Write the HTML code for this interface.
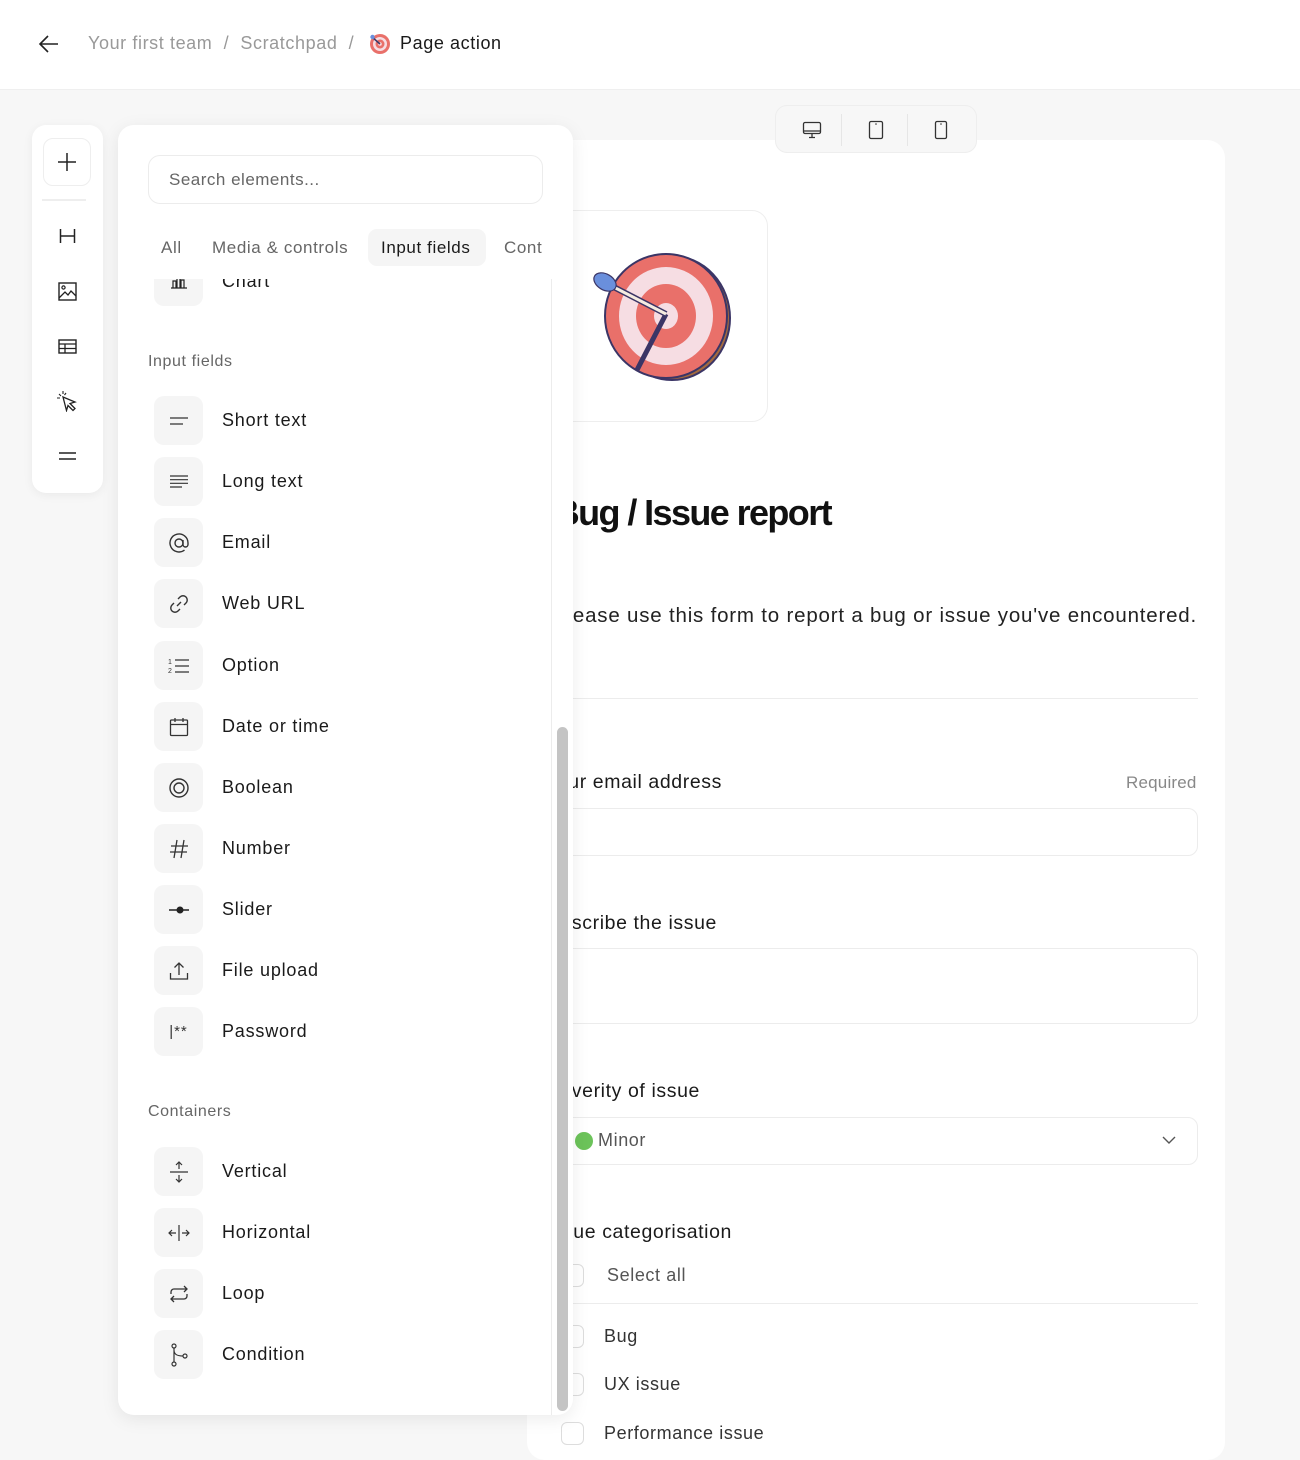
<!DOCTYPE html>
<html><head><meta charset="utf-8"><style>
*{box-sizing:border-box;margin:0;padding:0}
body{width:1300px;height:1447px;overflow:hidden;background:#f7f7f7;font-family:"Liberation Sans",sans-serif;color:#1a1a1a;position:relative}
.hdr{position:absolute;left:0;top:0;width:1300px;height:90px;background:#fff;border-bottom:1px solid #efefef}
.crumb{position:absolute;top:33px;font-size:18px;letter-spacing:0.6px}
.card{position:absolute;left:527px;top:140px;width:698px;height:1320px;background:#fff;border-radius:18px}
.abs{position:absolute}
.lbl{position:absolute;font-size:19.5px;letter-spacing:.6px;color:#1a1a1a;text-align:right;white-space:nowrap}
.inp{position:absolute;left:557px;width:641px;border:1px solid #ececec;border-radius:10px;background:#fff}
.cb{position:absolute;left:561px;width:23px;height:23px;border:1px solid #ddd;border-radius:6px;background:#fff}
.cbt{position:absolute;left:604px;font-size:18px;color:#333;letter-spacing:.6px}
.rail{position:absolute;left:32px;top:125px;width:71px;height:368px;background:#fff;border-radius:14px;box-shadow:0 2px 10px rgba(0,0,0,.06)}
.panel{position:absolute;left:118px;top:125px;width:455px;height:1290px;background:#fff;border-radius:16px;box-shadow:0 4px 18px rgba(0,0,0,.08);overflow:hidden;z-index:5}
.it{position:absolute;left:36px;height:49px;width:300px}
.ib{position:absolute;left:0;top:0;width:49px;height:49px;background:#f5f5f5;border-radius:10px;display:flex;align-items:center;justify-content:center}
.it span{position:absolute;left:68px;top:14px;font-size:18px;color:#1a1a1a;letter-spacing:0.8px}
.sec{position:absolute;left:30px;font-size:16px;color:#666;letter-spacing:.6px}
.tab{position:absolute;top:113px;font-size:17px;color:#666;letter-spacing:.6px}
svg{display:block}
</style></head><body>
<div class="hdr">
 <svg class="abs" style="left:38px;top:34px" width="22" height="20" viewBox="0 0 22 20"><path d="M20 10H2M10 2L2 10l8 8" fill="none" stroke="#222" stroke-width="1.6"/></svg>
 <div class="crumb" style="left:88px;color:#999">Your first team&nbsp; /&nbsp; Scratchpad&nbsp; /</div>
 <svg class="abs" style="left:369px;top:33px" width="22" height="22" viewBox="0 0 22 22"><circle cx="11" cy="11" r="10" fill="#e9706a"/><circle cx="11" cy="11" r="7" fill="#f6dde3"/><circle cx="11" cy="11" r="4.5" fill="#e9706a"/><circle cx="11" cy="11" r="1.8" fill="#f6dde3"/><path d="M3 4l8 7" stroke="#3a3a6a" stroke-width="1.5"/><circle cx="3.5" cy="4" r="2.2" fill="#6a8fdc"/></svg>
 <div class="crumb" style="left:400px;color:#1a1a1a">Page action</div>
</div>

<div class="abs" style="left:775px;top:105px;width:202px;height:48px;background:#f7f7f7;border:1px solid #eee;border-radius:12px;z-index:2">
 <div class="abs" style="left:65px;top:8px;width:1px;height:32px;background:#e6e6e6"></div>
 <div class="abs" style="left:131px;top:8px;width:1px;height:32px;background:#e6e6e6"></div>
 <svg class="abs" style="left:26px;top:15px" width="20" height="18" viewBox="0 0 20 18"><rect x="1.5" y="1.5" width="17" height="11" rx="1.5" fill="none" stroke="#333" stroke-width="1.3"/><path d="M1.5 10h17M10 13v3M7 16.5h6" stroke="#333" stroke-width="1.3"/></svg>
 <svg class="abs" style="left:92px;top:14px" width="16" height="20" viewBox="0 0 16 20"><rect x="1.5" y="1.5" width="13" height="17" rx="1.5" fill="none" stroke="#333" stroke-width="1.3"/><circle cx="8" cy="4" r=".8" fill="#333"/></svg>
 <svg class="abs" style="left:158px;top:14px" width="14" height="20" viewBox="0 0 14 20"><rect x="1.5" y="1.5" width="11" height="17" rx="1.5" fill="none" stroke="#333" stroke-width="1.3"/><circle cx="7" cy="4" r=".8" fill="#333"/></svg>
</div>

<div class="card">
 <div class="abs" style="left:30px;top:70px;width:211px;height:212px;border:1px solid #eee;border-radius:16px"></div>
 <svg class="abs" style="left:63px;top:110px" width="145" height="135" viewBox="0 0 145 135">
  <ellipse cx="82" cy="68" rx="58" ry="62" fill="#a36a3e" stroke="#3b3566" stroke-width="2"/>
  <ellipse cx="76" cy="66" rx="61" ry="62" fill="#e9706a" stroke="#3b3566" stroke-width="2"/>
  <ellipse cx="76" cy="66" rx="47" ry="49" fill="#f6dde3"/>
  <ellipse cx="76" cy="66" rx="30" ry="32" fill="#e9706a"/>
  <ellipse cx="76" cy="66" rx="12" ry="13" fill="#f6dde3"/>
  <path d="M76 64L47 120" stroke="#3b3566" stroke-width="5"/>
  <path d="M10 30L76 64" stroke="#3b3566" stroke-width="6"/><path d="M10 30L76 64" stroke="#f5ece0" stroke-width="3"/>
  <ellipse cx="15" cy="32" rx="12" ry="8" fill="#6a8fdc" stroke="#3b3566" stroke-width="1.2" transform="rotate(30 15 32)"/>
 </svg>
 <div class="abs" style="right:394px;top:352px;font-size:36px;font-weight:bold;letter-spacing:-1.6px;color:#111;white-space:nowrap">Bug / Issue report</div>
 <div class="abs" style="right:28px;top:464px;font-size:20.5px;letter-spacing:.8px;color:#222;white-space:nowrap">Please use this form to report a bug or issue you've encountered.</div>
 <div class="abs" style="left:30px;top:558px;width:641px;height:1px;background:#ececec"></div>
</div>
<div class="lbl" style="top:771px;right:578px">Your email address</div>
<div class="abs" style="left:1126px;top:773px;font-size:17px;color:#888;letter-spacing:.2px">Required</div>
<div class="inp" style="top:808px;height:48px"></div>
<div class="lbl" style="top:912px;right:583px">Describe the issue</div>
<div class="inp" style="top:948px;height:76px"></div>
<div class="lbl" style="top:1080px;right:600px">Severity of issue</div>
<div class="inp" style="top:1117px;height:48px"></div>
<div class="abs" style="left:575px;top:1132px;width:18px;height:18px;border-radius:50%;background:#6cc35a"></div>
<div class="abs" style="left:598px;top:1130px;font-size:18px;color:#555;letter-spacing:.6px">Minor</div>
<svg class="abs" style="left:1162px;top:1136px" width="14" height="9" viewBox="0 0 14 9"><path d="M1 1l6 6 6-6" fill="none" stroke="#555" stroke-width="1.4"/></svg>
<div class="lbl" style="top:1221px;right:568px">Issue categorisation</div>
<div class="cb" style="top:1264px"></div><div class="cbt" style="left:607px;top:1265px;color:#555">Select all</div>
<div class="abs" style="left:557px;top:1303px;width:641px;height:1px;background:#ececec"></div>
<div class="cb" style="top:1325px"></div><div class="cbt" style="top:1326px">Bug</div>
<div class="cb" style="top:1373px"></div><div class="cbt" style="top:1374px">UX issue</div>
<div class="cb" style="top:1422px"></div><div class="cbt" style="top:1423px">Performance issue</div>

<div class="rail">
 <div class="abs" style="left:11px;top:13px;width:48px;height:48px;border:1px solid #eee;border-radius:10px"></div>
 <svg class="abs" style="left:25px;top:27px" width="20" height="20" viewBox="0 0 20 20"><path d="M10 1v18M1 10h18" stroke="#222" stroke-width="1.5"/></svg>
 <div class="abs" style="left:10px;top:74px;width:44px;height:2px;background:#eee"></div>
 <svg class="abs" style="left:27px;top:103px" width="17" height="16" viewBox="0 0 17 16"><path d="M1.5 1v14M15.5 1v14M1.5 8h14" stroke="#222" stroke-width="1.5"/></svg>
 <svg class="abs" style="left:26px;top:157px" width="19" height="19" viewBox="0 0 19 19"><rect x="1" y="1" width="17" height="17" fill="none" stroke="#222" stroke-width="1.4"/><circle cx="5.5" cy="5.5" r="1.6" fill="none" stroke="#222" stroke-width="1.2"/><path d="M1 16l6-6 3 3 3-4 5 5" fill="none" stroke="#222" stroke-width="1.3"/></svg>
 <svg class="abs" style="left:26px;top:214px" width="19" height="15" viewBox="0 0 19 15"><rect x="1" y="1" width="17" height="13" fill="none" stroke="#222" stroke-width="1.4"/><path d="M1 5h17M1 9.5h17M7 5v9" stroke="#222" stroke-width="1.3"/></svg>
 <svg class="abs" style="left:24px;top:265px" width="22" height="22" viewBox="0 0 22 22"><path d="M7 7l12 5-5 1.5 5 5-2 2-5-5-1.5 5z" fill="none" stroke="#222" stroke-width="1.3"/><path d="M3 4l2 2M7 1v3M1 8h3M10 3l-1.5 2" stroke="#222" stroke-width="1.1"/></svg>
 <svg class="abs" style="left:26px;top:326px" width="19" height="10" viewBox="0 0 19 10"><path d="M1 2h17M1 8h17" stroke="#222" stroke-width="1.5"/></svg>
</div>

<div class="panel">
 <div class="abs" style="left:30px;top:30px;width:395px;height:49px;border:1px solid #ececec;border-radius:12px"></div>
 <div class="abs" style="left:51px;top:45px;font-size:17px;color:#666;letter-spacing:.5px">Search elements...</div>
 <div class="abs" style="left:0;top:150px;width:455px;height:1140px">
  <div class="it" style="top:-18px"><div class="ib"><svg width="20" height="14" viewBox="0 0 20 14"><path d="M2 13h16M4 13V6h3v7M8 13V2h3v11M12 13V5h3v8" fill="none" stroke="#222" stroke-width="1.2"/></svg></div><span>Chart</span></div>
  <div class="sec" style="top:78px">Input fields</div>
  <div class="it" style="top:121px"><div class="ib"><svg width="20" height="8" viewBox="0 0 20 8"><path d="M1 1h18M1 7h13" stroke="#333" stroke-width="1.3"/></svg></div><span>Short text</span></div>
  <div class="it" style="top:182px"><div class="ib"><svg width="20" height="13" viewBox="0 0 20 13"><path d="M1 1h18M1 4.7h18M1 8.3h18M1 12h12" stroke="#333" stroke-width="1.2"/></svg></div><span>Long text</span></div>
  <div class="it" style="top:243px"><div class="ib"><svg width="22" height="22" viewBox="0 0 22 22"><circle cx="11" cy="11" r="4" fill="none" stroke="#333" stroke-width="1.4"/><path d="M15 8v4.5a2.5 2.5 0 0 0 5 0V11a9 9 0 1 0-3.5 7.1" fill="none" stroke="#333" stroke-width="1.4"/></svg></div><span>Email</span></div>
  <div class="it" style="top:304px"><div class="ib"><svg width="22" height="22" viewBox="0 0 22 22"><path d="M9 13l4-4M10 6l2-2a4 4 0 0 1 6 6l-2 2M12 16l-2 2a4 4 0 0 1-6-6l2-2" fill="none" stroke="#333" stroke-width="1.4"/></svg></div><span>Web URL</span></div>
  <div class="it" style="top:366px"><div class="ib"><svg width="22" height="18" viewBox="0 0 22 18"><text x="0" y="7" font-size="7" font-family="Liberation Sans" fill="#333">1</text><text x="0" y="16" font-size="7" font-family="Liberation Sans" fill="#333">2</text><path d="M7 3h14M7 9h14M7 15h14" stroke="#333" stroke-width="1.3"/></svg></div><span>Option</span></div>
  <div class="it" style="top:427px"><div class="ib"><svg width="20" height="20" viewBox="0 0 20 20"><rect x="1.5" y="3" width="17" height="15.5" rx="1" fill="none" stroke="#333" stroke-width="1.3"/><path d="M1.5 7.5h17M6 1v4M14 1v4" stroke="#333" stroke-width="1.3"/></svg></div><span>Date or time</span></div>
  <div class="it" style="top:488px"><div class="ib"><svg width="22" height="22" viewBox="0 0 22 22"><circle cx="11" cy="11" r="9" fill="none" stroke="#333" stroke-width="1.4"/><circle cx="11" cy="11" r="5" fill="none" stroke="#333" stroke-width="1.4"/></svg></div><span>Boolean</span></div>
  <div class="it" style="top:549px"><div class="ib"><svg width="20" height="20" viewBox="0 0 20 20"><path d="M8 1L5 19M15 1l-3 18M2 7h17M1 13h17" stroke="#333" stroke-width="1.3"/></svg></div><span>Number</span></div>
  <div class="it" style="top:610px"><div class="ib"><svg width="22" height="10" viewBox="0 0 22 10"><path d="M1 5h20" stroke="#222" stroke-width="1.5"/><circle cx="12" cy="5" r="3.5" fill="#222"/></svg></div><span>Slider</span></div>
  <div class="it" style="top:671px"><div class="ib"><svg width="20" height="20" viewBox="0 0 20 20"><path d="M10 14V2M5.5 6.5L10 2l4.5 4.5M1.5 12v6h17v-6" fill="none" stroke="#333" stroke-width="1.3"/></svg></div><span>File upload</span></div>
  <div class="it" style="top:732px"><div class="ib"><span style="position:static;font-size:15px;letter-spacing:1px;color:#333">|**</span></div><span>Password</span></div>
  <div class="sec" style="top:828px">Containers</div>
  <div class="it" style="top:872px"><div class="ib"><svg width="20" height="24" viewBox="0 0 20 24"><path d="M1 12h18M10 2v7M7 5l3-3 3 3M10 15v7M7 19l3 3 3-3" fill="none" stroke="#333" stroke-width="1.2"/></svg></div><span>Vertical</span></div>
  <div class="it" style="top:933px"><div class="ib"><svg width="24" height="20" viewBox="0 0 24 20"><path d="M12 2v16M2 10h7M5 7l-3 3 3 3M15 10h7M19 7l3 3-3 3" fill="none" stroke="#333" stroke-width="1.2"/></svg></div><span>Horizontal</span></div>
  <div class="it" style="top:994px"><div class="ib"><svg width="22" height="20" viewBox="0 0 22 20"><path d="M3 10V8a3 3 0 0 1 3-3h13M16 2l3 3-3 3M19 10v2a3 3 0 0 1-3 3H3M6 12l-3 3 3 3" fill="none" stroke="#333" stroke-width="1.3"/></svg></div><span>Loop</span></div>
  <div class="it" style="top:1055px"><div class="ib"><svg width="20" height="24" viewBox="0 0 20 24"><circle cx="5" cy="3" r="2" fill="none" stroke="#333" stroke-width="1.2"/><circle cx="5" cy="21" r="2" fill="none" stroke="#333" stroke-width="1.2"/><circle cx="16" cy="13" r="2" fill="none" stroke="#333" stroke-width="1.2"/><path d="M5 5v14M5 7c0 5 4 6 9 6" fill="none" stroke="#333" stroke-width="1.2"/></svg></div><span>Condition</span></div>
 </div>
 <div class="abs" style="left:0;top:96px;width:455px;height:58px;background:#fff"></div>
 <div class="tab" style="left:43px">All</div>
 <div class="tab" style="left:94px">Media &amp; controls</div>
 <div class="abs" style="left:250px;top:104px;width:118px;height:37px;background:#f5f5f5;border-radius:9px"></div>
 <div class="tab" style="left:263px;color:#1a1a1a">Input fields</div>
 <div class="tab" style="left:386px">Cont</div>
 <div class="abs" style="left:433px;top:154px;width:1px;height:1136px;background:#ececec"></div>
 <div class="abs" style="left:439px;top:602px;width:11px;height:684px;background:#c4c4c4;border-radius:6px"></div>
</div>
</body></html>
